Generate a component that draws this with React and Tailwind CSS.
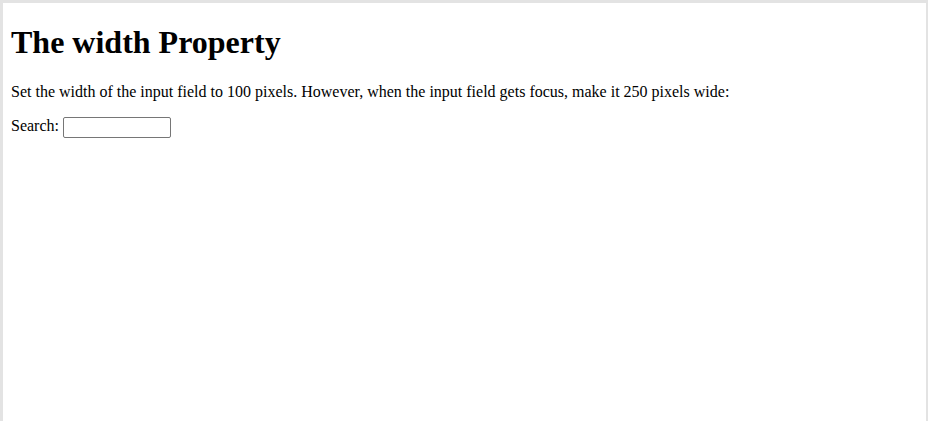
export default function App() {
  return (
    <div className="min-h-[421px] bg-[#e3e3e3] pt-[3px] pl-[3px] pr-[2px] flex flex-col" style={{ fontFamily: '"Liberation Serif", "Times New Roman", serif' }}>
      <div className="flex-1 bg-white px-2 pt-[21.44px] text-black text-base">
        <h1 className="text-[32px] font-bold leading-[normal] mb-[21.44px]">The width Property</h1>
        <p className="leading-[normal] mb-4">
          Set the width of the input field to 100 pixels. However, when the input field gets focus, make it 250 pixels wide:
        </p>
        <form className="leading-[normal]">
          <label htmlFor="search">Search: </label>
          <input
            id="search"
            type="text"
            className="w-[108px] h-[21px] border border-[#767676] rounded-[2px] px-[2px] text-[13px] align-middle outline-none"
          />
        </form>
      </div>
    </div>
  )
}
